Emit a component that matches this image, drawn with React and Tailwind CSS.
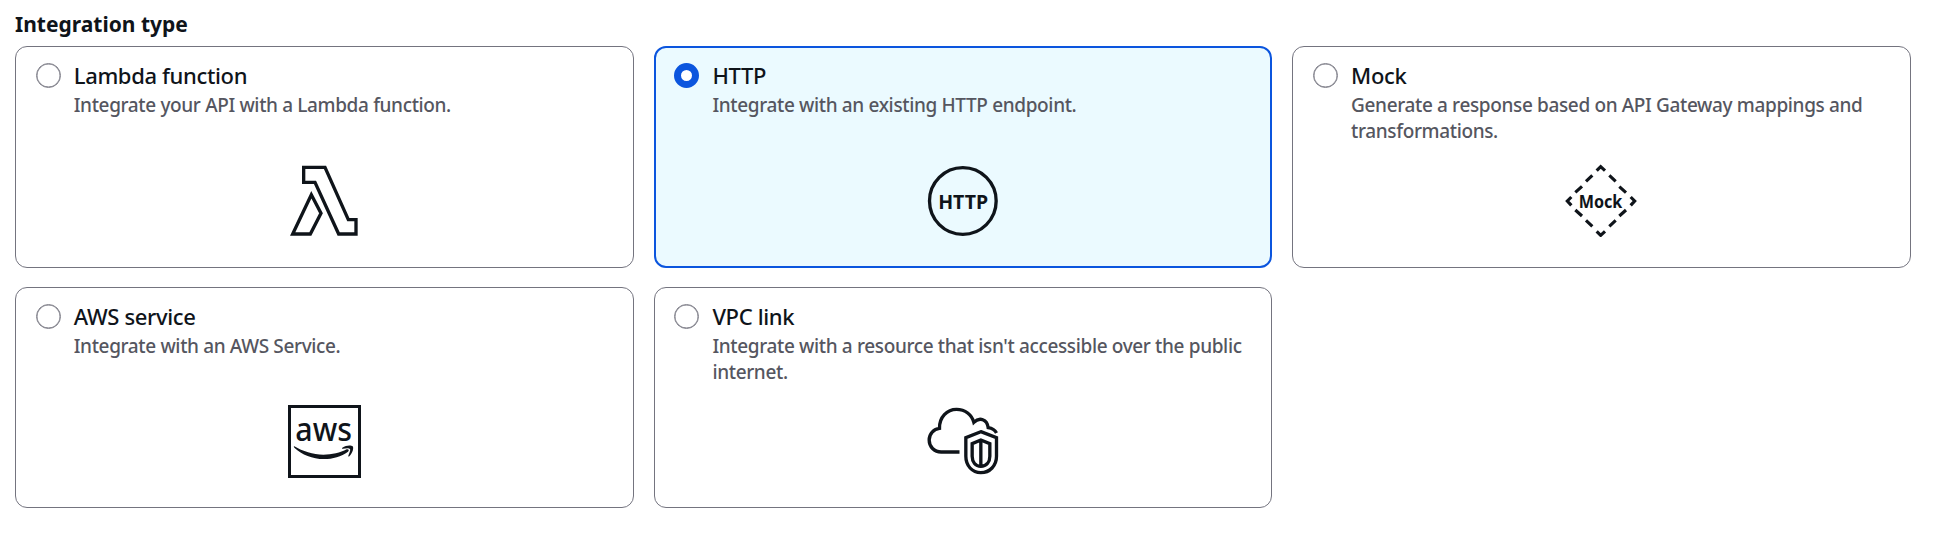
import React, { useState } from 'react';

const ICON_FONT = "'Noto Sans', 'Open Sans', sans-serif";

function LambdaIcon() {
  return (
    <svg width="73" height="73" viewBox="54 42 219 219" fill="none" stroke="currentColor" strokeWidth="10">
      <path d="M101 52H165L235 209H258V252H206L135 97H101Z" />
      <path d="M124 134L153 190L121 252H68Z" />
    </svg>
  );
}

function HttpIcon() {
  return (
    <svg width="73" height="73" viewBox="48.5 42 219 219">
      <circle cx="159" cy="153" r="100" fill="none" stroke="currentColor" strokeWidth="10" />
      <text x="85" y="177" textLength="150" fontFamily={ICON_FONT} fontSize="56" fontWeight="700" fill="currentColor" lengthAdjust="spacingAndGlyphs">HTTP</text>
    </svg>
  );
}

function MockIcon() {
  return (
    <svg width="73" height="73" viewBox="46 42 219 219">
      <g fill="none" stroke="currentColor" strokeWidth="9.5">
        <path d="M141 62L153 50L166 62M141 244L153 256L166 244M65 141L53 153L65 166M243 141L255 153L243 166" />
        <path d="M179 76L198 94M209 110L229 128M128 76L109 94M97 109L77 127" />
        <path d="M77 180L97 198M109 211L128 229M229 180L209 198M198 211L179 229" />
      </g>
      <text x="87" y="174" textLength="131" fontFamily={ICON_FONT} fontSize="52" fontWeight="700" fill="currentColor" lengthAdjust="spacingAndGlyphs">Mock</text>
    </svg>
  );
}

function AwsIcon() {
  return (
    <svg width="73" height="73" viewBox="54 45 219 219">
      <rect x="58.5" y="49.5" width="210" height="210" fill="none" stroke="currentColor" strokeWidth="9" />
      <text x="76" y="154" textLength="170" fontFamily={ICON_FONT} fontSize="99" fontWeight="500" fill="currentColor" lengthAdjust="spacingAndGlyphs">aws</text>
      <path d="M73 169C98 184 129 194 160 194C186 194 211 188 230 178C235 176 239 181 234 185C214 200 188 207 162 207C127 207 96 194 73 173C71 170 71 168 73 169Z" fill="currentColor" />
      <path d="M217 173C228 165 244 165 248 169C252 174 248 189 238 199C236 201 234 199 235 197C238 190 242 180 240 177C237 173 226 175 219 176C216 176 215 174 217 173Z" fill="currentColor" />
    </svg>
  );
}

function VpcLinkIcon() {
  return (
    <svg width="73" height="73" viewBox="48.5 45 219 219" fill="none" stroke="currentColor" strokeWidth="10">
      <path d="M149 186H94C73 186 58 170 58 150C58 131 72 117 89 115C88 81 112 58 140 58C166 58 186 74 192 97C209 80 232 88 235 113C247 115 255 119 260 129" />
      <path d="M213 125L260 143V199C260 227 240 248 213 248C187 248 168 227 168 199V143Z" />
      <path d="M213 150L240 161V199C240 216 230 229 213 229C197 229 187 216 187 199V161ZM213 150V229" />
    </svg>
  );
}

const options = [
  { id: 'lambda', title: 'Lambda function', description: 'Integrate your API with a Lambda function.', Icon: LambdaIcon },
  { id: 'http', title: 'HTTP', description: 'Integrate with an existing HTTP endpoint.', Icon: HttpIcon },
  { id: 'mock', title: 'Mock', description: 'Generate a response based on API Gateway mappings and transformations.', Icon: MockIcon },
  { id: 'aws', title: 'AWS service', description: 'Integrate with an AWS Service.', Icon: AwsIcon },
  { id: 'vpc', title: 'VPC link', description: "Integrate with a resource that isn't accessible over the public internet.", Icon: VpcLinkIcon },
];

function Tile({ option, selected, onSelect }) {
  const { title, description, Icon } = option;

  return (
    <button
      type="button"
      role="radio"
      aria-checked={selected}
      onClick={onSelect}
      className={`flex flex-col justify-start rounded-xl text-left ${
        selected
          ? 'border-2 border-[#0b55de] bg-[#ebfaff] px-[18.5px] pt-[15px]'
          : 'border border-[#74747f] bg-white px-[19.5px] pt-4'
      }`}
    >
      <div className="flex h-[101px] w-full gap-[13.25px]">
        {selected ? (
          <span className="size-[25px] shrink-0 rounded-full border-[7.5px] border-[#0b55de] bg-white" />
        ) : (
          <span className="size-[25px] shrink-0 rounded-full border border-[#7d7d87] bg-white inset-shadow-[0_0_0_0.5px_#7d7d87]" />
        )}
        <div>
          <div className="-mt-px text-[22px] leading-[27px] font-medium tracking-[-0.35px] text-[#0f141a]">{title}</div>
          <div className="mt-1 text-[19px] leading-[25.5px] font-medium tracking-[-0.36px] text-[#555660]">{description}</div>
        </div>
      </div>
      <div className="self-center text-[#0f141a]">
        <Icon />
      </div>
    </button>
  );
}

export default function App() {
  const [value, setValue] = useState('http');

  return (
    <div className="h-[534px] w-full bg-white pt-3 pr-[31px] pl-[15px] font-['Noto_Sans','Open_Sans',sans-serif]">
      <h2 className="h-[34px] text-[21px] leading-[24px] font-bold text-[#0f141a]">Integration type</h2>
      <div role="radiogroup" className="grid grid-cols-3 grid-rows-[222px_221px] gap-x-5 gap-y-[19px]">
        {options.map((option) => (
          <Tile key={option.id} option={option} selected={value === option.id} onSelect={() => setValue(option.id)} />
        ))}
      </div>
    </div>
  );
}
